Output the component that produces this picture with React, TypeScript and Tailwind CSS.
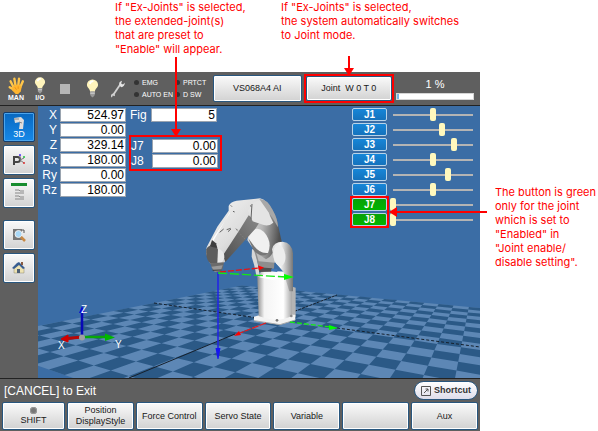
import { clsx } from 'clsx';
import type { ReactNode } from 'react';

const POSE = [
  ['X', '524.97'],
  ['Y', '0.00'],
  ['Z', '329.14'],
  ['Rx', '180.00'],
  ['Ry', '0.00'],
  ['Rz', '180.00'],
];

const JOINTS = [
  { name: 'J1', value: 50 },
  { name: 'J2', value: 61 },
  { name: 'J3', value: 76 },
  { name: 'J4', value: 50 },
  { name: 'J5', value: 69 },
  { name: 'J6', value: 50 },
];

const EX_JOINTS = [
  { name: 'J7', value: 0 },
  { name: 'J8', value: 0 },
];

// Projects floor coordinates (robot base at 0,0) onto the view.
function project(a: number, b: number) {
  const w = 1 + 0.45 * a + 0.2315 * b;
  const x = (272 + 217 * a - 82.3 * b) / w;
  const y = (320 + 107 * a + 53.1 * b) / w;
  return `${x.toFixed(1)} ${y.toFixed(1)}`;
}

function tile(a: number, b: number, size = 0.1) {
  return `M${project(a, b)}L${project(a + size, b)}L${project(a + size, b + size)}L${project(a, b + size)}Z`;
}

function darkTiles() {
  let d = '';
  for (let i = -10; i < 10; i++) {
    for (let j = -12; j < 10; j++) {
      if ((i + j) % 2 === 0) d += tile(i / 10, j / 10);
    }
  }
  return d;
}

function Floor() {
  return (
    <g>
      <path
        d={`M${project(-1, -1.2)}L${project(1, -1.2)}L${project(1, 1)}L${project(-1, 1)}Z`}
        fill="#5d87b5"
      />
      <path d={darkTiles()} fill="#2b5986" />
      <path d="M129 378L235 334" stroke="#16202c" strokeWidth="1" />
      <path d="M272 320L337 295" stroke="#16202c" strokeWidth="1" strokeDasharray="3 1" />
      <path d="M154 303L272 320" stroke="#16202c" strokeWidth="1" strokeDasharray="3 2" />
      <path d="M337 328L480 347" stroke="#16202c" strokeWidth="1" strokeDasharray="3 2" />
    </g>
  );
}

function Robot() {
  return (
    <g transform="translate(180 190) scale(.3333)">
      <defs>
        <linearGradient id="column" x1="0" x2="1">
          <stop offset="0" stopColor="#8c8c8c" />
          <stop offset=".2" stopColor="#f4f4f4" />
          <stop offset=".75" stopColor="#fff" />
          <stop offset="1" stopColor="#a8a8a8" />
        </linearGradient>
        <linearGradient id="upper" x1="0" x2="1" y2=".2">
          <stop offset="0" stopColor="#e9e9e9" />
          <stop offset=".5" stopColor="#b5b5b5" />
          <stop offset="1" stopColor="#505050" />
        </linearGradient>
        <linearGradient id="forearm" x1="0" x2=".8" y1="0" y2=".8">
          <stop offset="0" stopColor="#f5f5f5" />
          <stop offset=".6" stopColor="#dedede" />
          <stop offset="1" stopColor="#bdbdbd" />
        </linearGradient>
        <linearGradient id="underside" x1="1" x2="0" y1="0" y2="1">
          <stop offset="0" stopColor="#8a8a8a" />
          <stop offset="1" stopColor="#4e4e4e" />
        </linearGradient>
        <linearGradient id="shoulder" x1="0" x2="1">
          <stop offset="0" stopColor="#d8d8d8" />
          <stop offset=".4" stopColor="#f6f6f6" />
          <stop offset="1" stopColor="#777" />
        </linearGradient>
      </defs>
      {/* base */}
      <path d="M330 288L347 293V380L330 384Z" fill="#b4b4b4" />
      <path d="M222 380L240 375L346 374V390L300 404L222 392Z" fill="#f3f3f3" />
      <path d="M222 392L300 404L346 390" fill="none" stroke="#aaa" strokeWidth="3" />
      <path d="M232 262L245 242L326 245L336 280V378Q290 400 236 378Z" fill="url(#column)" />
      <path d="M238 262Q260 240 312 264L278 270Z" fill="#fff" />
      <circle cx="291" cy="391" r="4" fill="#777" />
      <circle cx="334" cy="378" r="4" fill="#888" />
      {/* lower arm */}
      <path d="M216 178L226 178L240 260L229 258Q224 225 215 200Z" fill="#d7d7d7" />
      <path d="M222 180L285 185L282 236L238 236Z" fill="#8e8e8e" />
      <path d="M228 185L285 190V218L236 214Z" fill="#bcbcbc" />
      <path d="M236 232L276 235L274 245L238 246Z" fill="#505050" />
      <path d="M274 236L292 236V246L274 244Z" fill="#4175b5" />
      <path d="M212 100L268 45Q290 75 294 105L306 158L286 168Q278 200 258 208Q222 185 202 150Z" fill="url(#upper)" />
      <path d="M205 145Q222 100 252 126Q278 155 264 189Q240 192 222 168Z" fill="#f0f0f0" />
      <path d="M205 145L222 168Q240 192 264 189Q245 208 220 180Z" fill="#777" />
      <path d="M276 178Q280 155 308 155Q336 158 339 190V304L328 304L310 245L283 214Z" fill="url(#shoulder)" />
      <ellipse cx="298" cy="196" rx="18" ry="32" fill="#ededed" transform="rotate(-8 298 196)" />
      {/* forearm */}
      <path d="M146 48Q152 35 170 32L240 25Q262 30 268 58L232 102L132 218Q112 230 90 220L78 190L80 172L112 110L146 62Z" fill="url(#forearm)" />
      <path d="M206 76L238 98L226 116L136 216L129 196L180 118Z" fill="url(#underside)" />
      <path d="M148 50L150 66L96 160L88 170L100 144L150 70Z" fill="#fff" />
      <path d="M214 44Q232 26 250 32Q264 50 270 78L280 98Q265 112 242 102L218 94L204 62Z" fill="#e4e4e4" />
      <path d="M238 27Q262 26 278 60Q294 88 294 112L276 82Z" fill="#a8a8a8" />
      <path d="M216 42L213 88M152 46l4 4M159 64l5 2M119 127l12-10M140 119l12-4M144 125l9-8M168 116l5 5M210 47l4 2" stroke="#626262" strokeWidth="3" fill="none" />
      <path d="M170 120L205 158" stroke="#8a8a8a" strokeWidth="1.5" strokeDasharray="5 3" />
      {/* wrist */}
      <path d="M79 178Q88 160 108 168L116 182L118 218L92 221Q76 208 79 178Z" fill="#5d5d5d" />
      <path d="M90 168L96 150L108 160L112 174L96 171Z" fill="#3e3e3e" />
      <path d="M114 176Q134 182 133 203Q127 223 112 220Z" fill="#e8e8e8" />
      <path d="M91 220L132 217L128 237L114 249L98 241Z" fill="#6b6b6b" />
      <path d="M94 230L128 226L122 242L104 245Z" fill="#999" />
      <path d="M98 241L124 240" stroke="#383838" strokeWidth="3" />
    </g>
  );
}

function Axes() {
  return (
    <g fill="none">
      {/* tool frame */}
      <path d="M218 272V351" stroke="#2222e8" strokeWidth="1.5" />
      <path d="M215.500 348h5l-2 11h-1z" fill="#1616f0" />
      <path d="M220 272L259 268" stroke="#e81414" strokeWidth="1.3" strokeDasharray="6 2" />
      <path d="M258 265.500l6 2-5 3z" fill="#f00" />
      <path d="M218 273L286 277" stroke="#14e814" strokeWidth="1.3" strokeDasharray="9 3" />
      <path d="M284 274l10 3-10 3z" fill="#0f0" />
      {/* base frame */}
      <path d="M266 323L240 333" stroke="#f01818" strokeWidth="1.2" strokeDasharray="7 1" />
      <path d="M234 336l5-5 2 4z" fill="#f00" />
      <path d="M290 322L330 327" stroke="#14e814" strokeWidth="1.3" strokeDasharray="5 2" />
      <path d="M329 325l9 3-9 2z" fill="#0f0" />
      {/* orientation gizmo */}
      <path d="M82 337V312" stroke="#0808b8" strokeWidth="2.500" />
      <path d="M79 313l3-7 3 7z" fill="#0808d8" />
      <path d="M82 337L67 338.500" stroke="#b80808" strokeWidth="3" />
      <path d="M61 339l7-4v7z" fill="#d00000" stroke="#d00000" />
      <path d="M84 337H107" stroke="#08a808" strokeWidth="2.500" />
      <path d="M105 333.500l10 4-10 3.500z" fill="#00b800" />
      <circle cx="82" cy="337.500" r="3" fill="#a0a0a0" />
      <g fill="#fff" fontSize="10" fontFamily="Liberation Sans, sans-serif">
        <text x="58" y="349">X</text>
        <text x="115" y="348">Y</text>
        <text x="81" y="313">Z</text>
      </g>
    </g>
  );
}

function Scene() {
  return (
    <svg
      viewBox="38 106 442 272"
      preserveAspectRatio="xMidYMax slice"
      className="absolute inset-0 h-full w-full"
      role="img"
      aria-label="Robot arm 3D view"
    >
      <Floor />
      <Robot />
      <Axes />
    </svg>
  );
}

function Bulb({ className }: { className: string }) {
  return (
    <svg viewBox="0 0 14 20" className={className}>
      <path d="M4.500 14C4.500 10 1 9.500 1 6a6 5.700 0 0 1 12 0c0 3.500-3.500 4-3.500 8z" fill="#fff4bc" />
      <path d="M4 5q1-3 4-3" stroke="#fff" strokeWidth="2" fill="none" />
      <path d="M4.500 13h5v4l-2 2.500h-1l-2-2.500z" fill="#999" />
      <path d="M4.500 15h5" stroke="#ddd" />
    </svg>
  );
}

function Hand() {
  return (
    <svg viewBox="0 0 20 20" className="h-[17px] w-[17px]">
      <g fill="none" stroke="#ffc64a" strokeWidth="2.800" strokeLinecap="round">
        <path d="M7 13L3 5M9 11L7.500 2M12 11L13 2M14 13L17.500 5M7 15L2 12" />
      </g>
      <path d="M5 12L9 9h5l2 3-1 5-3 3H9l-4-4z" fill="#ffb52f" />
      <path d="M8 12l2 3M12 11v3" stroke="#e88c13" />
    </svg>
  );
}

function Wrench() {
  return (
    <svg viewBox="0 0 16 22" className="h-[20px] w-[15px]">
      <path d="M3 18L11 6" stroke="#d0d0d0" strokeWidth="2" />
      <path d="M10 7q-1-4 3-5l-1 3 2 1 2-2q0 4-4 5z" fill="#e4e4e4" />
      <path d="M1 20q-1-4 3-4 2 1 1 3l-2-1-1 2z" fill="#d2d2d2" />
    </svg>
  );
}

function Led({ label }: { label: string }) {
  return (
    <span className="flex items-center gap-[3px] text-[7px] leading-[12px] whitespace-nowrap text-white">
      <i className="h-[5px] w-[5px] rounded-full bg-[#333]" />
      {label}
    </span>
  );
}

function PanelButton({ className, children }: { className?: string; children?: ReactNode }) {
  return (
    <button
      type="button"
      className={clsx(
        'flex flex-col items-center justify-center rounded-[2px] border border-[#28567e] bg-linear-to-b from-[#fafafa] to-[#d2d2d2] text-[9px] leading-[11px] text-[#181818] inset-ring inset-ring-white',
        className,
      )}
    >
      {children}
    </button>
  );
}

function SideButton({ label, children }: { label: string; children: ReactNode }) {
  return (
    <button
      type="button"
      aria-label={label}
      className="flex h-[30px] w-full items-center justify-center rounded-[2px] border border-[#28567e] bg-linear-to-b from-[#fafafa] to-[#d2d2d2] inset-ring inset-ring-white"
    >
      {children}
    </button>
  );
}

function Sidebar() {
  return (
    <nav className="w-[38px] shrink-0 bg-[#5f5f5f] px-[3px] pt-[6px]">
      <div className="flex flex-col gap-[3px]">
        <button
          type="button"
          className="flex h-[30px] flex-col items-center justify-center rounded-[2px] border border-[#123e70] bg-linear-to-b from-[#0868c0] to-[#1688e8] text-[9px] leading-[9px] text-white inset-ring inset-ring-[#4ba5ed]"
        >
          <svg viewBox="0 0 12 14" className="h-[14px] w-[12px]">
            <path d="M1 2l7-1 3 3-1 9H6l1-7-5 1z" fill="#ddd" />
            <path d="M1 3h5M6 6l3 1" stroke="#888" />
          </svg>
          3D
        </button>
        <SideButton label="Position">
          <svg viewBox="0 0 14 14" className="h-[14px] w-[14px]">
            <path d="M2 12V4h3.500a2.300 2.300 0 0 1 0 5H2" fill="none" stroke="#444" strokeWidth="2" />
            <path d="M8 7V2M8 7l4-2M8 7l4 3" stroke="#777" />
            <circle cx="8" cy="2" r="1" fill="#53f" />
            <circle cx="12" cy="4" r="1" fill="#2b4" />
            <circle cx="12" cy="10" r="1" fill="#d33" />
          </svg>
        </SideButton>
        <SideButton label="Program list">
          <svg viewBox="0 0 18 20" className="h-[20px] w-[18px]">
            <path d="M1 0h16v3H1z" fill="#178c2e" />
            <path d="M5 7h4l1 1h4M5 10h9M5 13h4l1 1h4M5 16h9" stroke="#888" fill="none" />
          </svg>
        </SideButton>
      </div>
      <div className="mt-3 flex flex-col gap-[3px]">
        <SideButton label="Search">
          <svg viewBox="0 0 14 14" className="h-[14px] w-[14px]">
            <path d="M1 1h9v11H1z" fill="#777" />
            <path d="M10 2h2v3" stroke="#555" fill="none" />
            <circle cx="6.500" cy="6" r="3.500" fill="#a8d8f7" stroke="#eee" />
            <path d="M9 9l4 4" stroke="#c88943" strokeWidth="2.500" />
          </svg>
        </SideButton>
        <SideButton label="Home">
          <svg viewBox="0 0 14 14" className="h-[14px] w-[14px]">
            <path d="M2 7l5-4 5 4v5H2z" fill="#eee3b3" stroke="#8a8570" strokeWidth=".5" />
            <path d="M0 7l5-5 2-1 6 6-2 1-4-4-5 4z" fill="#385d91" />
            <path d="M5 8h3v4H5z" fill="#4e6076" />
            <path d="M9 1h2v3H9z" fill="#885b42" />
          </svg>
        </SideButton>
      </div>
    </nav>
  );
}

function Field({ name, value, alignLeft }: { name: string; value: string; alignLeft?: boolean }) {
  return (
    <label className="flex h-[15px] items-center gap-[3px] text-[12px] leading-[14px] text-white">
      <span className={clsx('w-[18px]', alignLeft ? 'text-left' : 'text-right')}>{name}</span>
      <input
        readOnly
        value={value}
        className="h-[14px] w-[66px] border border-[#9aa4b0] bg-white px-px text-right text-[12px] leading-3 font-medium text-black"
      />
    </label>
  );
}

function JointRow({ name, value, enabled }: { name: string; value: number; enabled?: boolean }) {
  return (
    <div className="flex h-[15px] items-center gap-[3px]">
      <button
        type="button"
        className={clsx(
          'h-[13px] w-[35px] rounded-[2px] border border-[#b9d3e8] text-[10px] leading-[11px] font-bold text-white',
          enabled ? 'bg-linear-to-b from-[#08a008] to-[#00b400]' : 'bg-linear-to-b from-[#1686d8] to-[#1572bc]',
        )}
      >
        {name}
      </button>
      <input
        type="range"
        aria-label={name}
        defaultValue={value}
        className="h-[13px] w-[86px] appearance-none bg-linear-to-b from-[#b4b4b4] to-[#b4b4b4] bg-[length:80px_2px] bg-center bg-no-repeat [&::-webkit-slider-thumb]:h-[13px] [&::-webkit-slider-thumb]:w-[6px] [&::-webkit-slider-thumb]:appearance-none [&::-webkit-slider-thumb]:rounded-[2px] [&::-webkit-slider-thumb]:bg-[#fff8bd]"
      />
    </div>
  );
}

function ArrowDown({ className }: { className: string }) {
  return (
    <span className={clsx('absolute bottom-full left-1/2 z-10 flex w-[10px] -translate-x-1/2 flex-col items-center', className)}>
      <i className="w-[2px] flex-1 bg-[#f00]" />
      <svg viewBox="0 0 10 8" className="h-2 w-[10px] shrink-0" fill="#f00">
        <path d="M0 0h10L5 8z" />
      </svg>
    </span>
  );
}

function Toolbar() {
  return (
    <header className="flex h-[34px] items-center border-b border-[#222] bg-[#5f5f5f] pr-[6px]">
      <div className="flex w-[134px] shrink-0 items-center pl-[6px] text-[7px] leading-[7px] font-bold text-white">
        <span className="flex w-5 flex-col items-center">
          <Hand />
          MAN
        </span>
        <span className="ml-[6px] flex w-4 flex-col items-center">
          <Bulb className="h-[17px] w-[12px]" />
          I/O
        </span>
        <i className="ml-3 h-[10px] w-[10px] bg-[#b6b6b6]" />
        <Bulb className="ml-4 h-[19px] w-[13px]" />
        <span className="ml-[11px]">
          <Wrench />
        </span>
      </div>
      <div className="grid w-[79px] shrink-0 grid-cols-[41px_38px]">
        <Led label="EMG" />
        <Led label="PRTCT" />
        <Led label="AUTO EN" />
        <Led label="D SW" />
      </div>
      <div className="flex flex-1 items-center gap-[2px]">
        <PanelButton className="h-[27px] flex-1">VS068A4 AI</PanelButton>
        <div className="relative flex-1 border-2 border-[#f00]">
          <ArrowDown className="h-[20px]" />
          <PanelButton className="h-[25px] w-full whitespace-pre">Joint  W 0 T 0</PanelButton>
        </div>
        <label className="w-[78px] text-center text-[11px] leading-[13px] text-white">
          1 %
          <progress
            value={1}
            max={50}
            className="mt-[2px] block h-[7px] w-full appearance-none border border-[#d5d5d5] [&::-webkit-progress-bar]:bg-white [&::-webkit-progress-value]:bg-[#76b9e8]"
          />
        </label>
      </div>
    </header>
  );
}

function View() {
  return (
    <main className="relative min-h-[272px] flex-1 bg-[#3b6da5]">
      <Scene />
      <div className="relative flex justify-between pt-px pr-1">
        <div className="flex">
          <div className="pl-px">
            {POSE.map(([name, value]) => (
              <Field key={name} name={name} value={value} />
            ))}
          </div>
          <div className="ml-[3px]">
            <div className="pl-px">
              <Field name="Fig" value="5" alignLeft />
            </div>
            <div className="relative mt-[13px] border-2 border-[#f00] py-px pr-[2px]">
              <ArrowDown className="h-[80px]" />
              <Field name="J7" value="0.00" alignLeft />
              <Field name="J8" value="0.00" alignLeft />
            </div>
          </div>
        </div>
        <div>
          <div className="pl-[2px]">
            {JOINTS.map((joint) => (
              <JointRow key={joint.name} {...joint} />
            ))}
          </div>
          <div className="relative pl-[2px]">
            {EX_JOINTS.map((joint) => (
              <JointRow key={joint.name} {...joint} enabled />
            ))}
            <span className="absolute -top-px left-0 h-8 w-[39px] border-2 border-[#f00]" />
          </div>
        </div>
      </div>
    </main>
  );
}

function Footer() {
  return (
    <footer className="border-t border-[#222] bg-[#5f5f5f] px-[2px] pb-[2px]">
      <div className="flex h-[23px] items-center justify-between pl-[2px]">
        <p className="text-[12px] leading-4 text-white">[CANCEL] to Exit</p>
        <button
          type="button"
          className="flex h-[19px] w-[64px] items-center justify-center gap-[3px] rounded-full border border-[#28567e] bg-linear-to-b from-white to-[#deddea] text-[9px] font-bold text-[#333]"
        >
          <svg viewBox="0 0 10 10" className="h-[10px] w-[10px]" fill="none" stroke="#555">
            <path d="M.5.5h9v9h-9zM3 7l4-4M4.500 3H7v2.500" />
          </svg>
          Shortcut
        </button>
      </div>
      <div className="flex gap-[2px]">
        <PanelButton className="h-[28px] w-[63px]">
          <i className="mb-px h-[7px] w-[7px] rounded-full bg-[#777] inset-ring inset-ring-[#999]" />
          SHIFT
        </PanelButton>
        <PanelButton className="h-[28px] flex-1">
          <span>Position</span>
          <span>DisplayStyle</span>
        </PanelButton>
        <PanelButton className="h-[28px] flex-1">Force Control</PanelButton>
        <PanelButton className="h-[28px] flex-1">Servo State</PanelButton>
        <PanelButton className="h-[28px] flex-1">Variable</PanelButton>
        <PanelButton className="h-[28px] flex-1" />
        <PanelButton className="h-[28px] flex-1">Aux</PanelButton>
      </div>
    </footer>
  );
}

export default function App() {
  return (
    <div className="flex min-h-screen bg-white font-['Liberation_Sans',sans-serif]">
      <div className="flex min-w-0 flex-1 flex-col">
        <div className="flex h-[72px] shrink-0 font-['Inter',sans-serif] text-[11px] leading-[14px] whitespace-nowrap text-[#f00]">
          <p className="ml-[115px] w-[166px]">
            If "Ex-Joints" is selected,
            <br />
            the extended-joint(s)
            <br />
            that are preset to
            <br />
            "Enable" will appear.
          </p>
          <p>
            If "Ex-Joints" is selected,
            <br />
            the system automatically switches
            <br />
            to Joint mode.
          </p>
        </div>
        <Toolbar />
        <div className="flex flex-1">
          <Sidebar />
          <View />
        </div>
        <Footer />
      </div>
      <aside className="relative w-[118px] shrink-0 pt-[185px] pl-[15px] font-['Inter',sans-serif] text-[11px] leading-[14px] whitespace-nowrap text-[#f00]">
        <span className="absolute top-[207px] right-[111px] z-10 flex w-[98px] items-center">
          <svg viewBox="0 0 8 10" className="h-[10px] w-2 shrink-0" fill="#f00">
            <path d="M8 0v10L0 5z" />
          </svg>
          <i className="h-[2px] flex-1 bg-[#f00]" />
        </span>
        <p>
          The button is green
          <br />
          only for the joint
          <br />
          which is set to
          <br />
          "Enabled" in
          <br />
          "Joint enable/
          <br />
          disable setting".
        </p>
      </aside>
    </div>
  );
}
